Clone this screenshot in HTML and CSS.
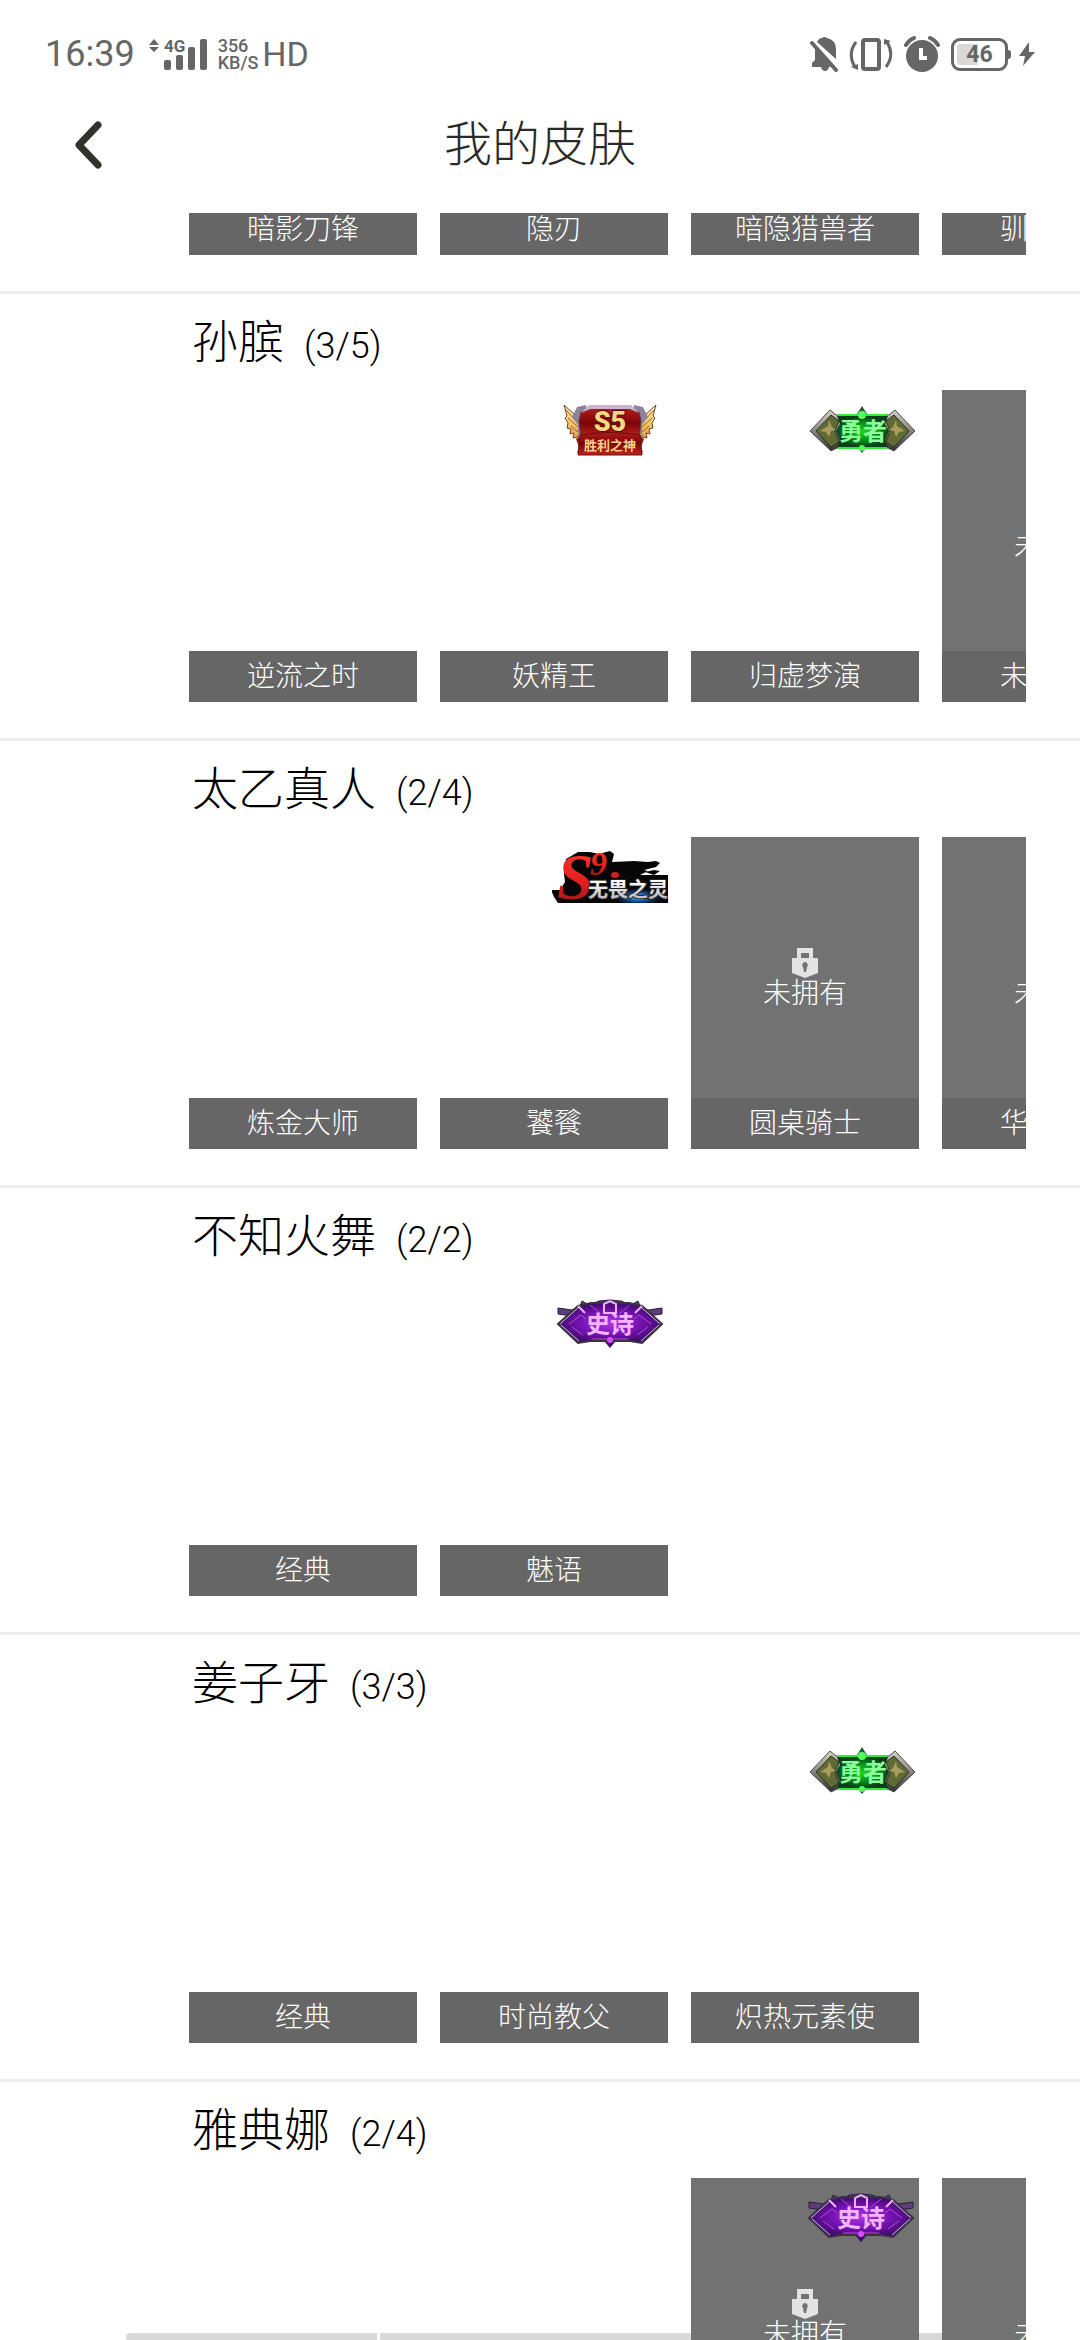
FILE: index.html
```html
<!DOCTYPE html>
<html lang="zh-CN">
<head>
  <meta charset="UTF-8" />
  <meta name="viewport" content="width=device-width, initial-scale=1.0" />
  <title>我的皮肤</title>
  <link rel="stylesheet" href="styles.css">
</head>
<body>
  <!-- shared icons and badge frames -->
  <svg class="sprite" width="0" height="0" aria-hidden="true">
    <defs>
      <linearGradient id="gold" x1="0" y1="0" x2="0" y2="1">
        <stop offset="0" stop-color="#fff3b0" />
        <stop offset="1" stop-color="#e9a23c" />
      </linearGradient>
      <linearGradient id="red" x1="0" y1="0" x2="0" y2="1">
        <stop offset="0" stop-color="#b01a1a" />
        <stop offset="0.5" stop-color="#7d0508" />
        <stop offset="1" stop-color="#c0261c" />
      </linearGradient>
      <radialGradient id="green">
        <stop offset="0" stop-color="#18d818" />
        <stop offset="0.6" stop-color="#078a1c" />
        <stop offset="1" stop-color="#0c3d1c" />
      </radialGradient>
      <radialGradient id="purple">
        <stop offset="0" stop-color="#b035e4" />
        <stop offset="0.6" stop-color="#7412b0" />
        <stop offset="1" stop-color="#420b70" />
      </radialGradient>
      <linearGradient id="steel" x1="0" y1="0" x2="0" y2="1">
        <stop offset="0" stop-color="#d6d0ca" />
        <stop offset="0.5" stop-color="#8a8680" />
        <stop offset="1" stop-color="#2d2f33" />
      </linearGradient>
      <linearGradient id="brush" x1="0" y1="0" x2="0" y2="1">
        <stop offset="0" stop-color="#ff3a2c" />
        <stop offset="0.6" stop-color="#e01f1f" />
        <stop offset="1" stop-color="#7c1016" />
      </linearGradient>
      <linearGradient id="silver" x1="0" y1="0" x2="0" y2="1">
        <stop offset="0.3" stop-color="#ffffff" />
        <stop offset="1" stop-color="#a9a3a8" />
      </linearGradient>
      <radialGradient id="blue">
        <stop offset="0" stop-color="#9fe0ff" />
        <stop offset="0.3" stop-color="#1c7fe8" />
        <stop offset="1" stop-color="#0b2a66" stop-opacity="0" />
      </radialGradient>
    </defs>

    <symbol id="lock" viewBox="0 0 26 30">
      <path fill="#e3e3e3" fill-rule="evenodd" d="M5 0h16v10h5v15l-13 5-13-5V10h5zM9 5v5h8V5zM13 14a3 3 0 0 0-2 5l1 5h2l1-5a3 3 0 0 0-2-5z" />
    </symbol>

    <symbol id="frame-s5" viewBox="0 0 116 52">
      <path fill="url(#gold)" stroke="#7a3f2a" stroke-width="1" d="M12 1l11 10 5 10-2 12-5 1 1-5-4 1 1-5-4-1 1-5-3-5 2-2zM104 1L93 11l-5 10 2 12 5 1-1-5 4 1-1-5 4-1-1-5 3-5-2-2z" />
      <path fill="none" stroke="#9d5a26" stroke-width="1" d="M14 6l11 12M16 14l10 9M19 22l7 6M102 6L91 18M100 14l-10 9M97 22l-7 6" />
      <path fill="#8b8399" d="M34 1l-9 2-5 10 6 8v14h8l2-22zM82 1l9 2 5 10-6 8v14h-8l-2-22z" />
      <path fill="url(#red)" stroke="#5d3a4a" stroke-width="1" d="M38 5h40l9 3 2 9-2 17H29l-2-17 2-9z" />
      <path fill="#cdb3cb" d="M29 9l8-8h42l8 8-9-4H38z" />
      <path fill="#8f1512" d="M24 35l5-3v15l-4 2 2-6zM92 35l-5-3v15l4 2-2-6z" />
      <path fill="url(#red)" stroke="#66100e" stroke-width="1" d="M28 31q30-5 60 0l2 20H26z" />
    </symbol>

    <symbol id="frame-s9" viewBox="0 0 116 52">
      <path fill="#060606" d="M14 8L26 1h12l9 2 11-3 4 3-2 8 22-1 14 1 8-1 4 2-4 4-12 3 4 1-8 4h28v28H38L30 52H6l-4-6-3-7h9l5-8-1-8z" />
      <path fill="#060606" d="M93 21l9-2 6 1-6 4z" />
      <ellipse cx="86" cy="46" rx="26" ry="9" fill="url(#blue)" />
      <ellipse cx="63" cy="24" rx="4" ry="3" fill="#d41f2c" />
    </symbol>

    <symbol id="frame-brave" viewBox="0 0 116 52">
      <path fill="#1c5a2c" d="M59 2l5 8H54zM59 49l5-6H54z" />
      <path fill="url(#steel)" stroke="#4b4a48" stroke-width="1" d="M7 27L27 6l6 5h53l6-5 20 21-21 20-6-3H34l-6 3z" />
      <path fill="#5f6a34" stroke="#2b3320" stroke-width="1" d="M13 27L28 11l8 6-4 10 4 11-8 5zM106 27L91 11l-8 6 4 10-4 11 8 5z" />
      <path fill="#a99c5c" d="M17 27l8-5 1-6 3 7 4 3-5 1-2 6-3-5zM102 27l-8-5-1-6-3 7-4 3 5 1 2 6 3-5z" />
      <path fill="url(#green)" d="M34 12h51l-3 8 4 7-4 9 3 7H34l3-7-4-9 4-7z" />
      <path fill="none" stroke="#2bee36" stroke-width="2" d="M35 11h49M35 44h49" />
      <circle cx="59" cy="11" r="4" fill="#55ff5c" />
      <circle cx="59" cy="44" r="3" fill="#55ff5c" />
    </symbol>

    <symbol id="frame-epic" viewBox="0 0 116 52">
      <path fill="#5b3f7c" stroke="#2a1c3c" stroke-width="1" d="M6 10l14 2 8-4 2-5 7 4 10-4 11-1 11 1 10 4 7-4 2 5 8 4 14-2v6l-14 2H20L6 16z" />
      <path fill="#3b0a63" d="M58 50l-5-6h10z" />
      <path fill="url(#purple)" stroke="#39323f" stroke-width="2" d="M6 26L26 8l13-3h38l13 3 20 18-20 19-12-2H38l-12 2z" />
      <path fill="none" stroke="#d0c2da" stroke-width="1" d="M8 26L27 9M108 26L89 9M9 27l18 16M107 27L89 43" />
      <path fill="none" stroke="#b24be0" stroke-width="1" d="M17 26l12-9 5 4M99 26l-12-9-5 4M20 29l11 8M96 29l-11 8M38 7l10 8M78 7l-10 8M40 41h36" />
      <path fill="none" stroke="#f3b0ff" stroke-width="2" d="M52 15V6l6-3 6 3v9zM26 8l7 7M90 8l-7 7" />
      <circle cx="58" cy="42" r="3" fill="#e24bff" />
    </symbol>
  </svg>

  <div class="status-bar">
    <div class="status-left">
      <span class="clock">16:39</span>
      <svg class="signal" viewBox="0 0 58 32" width="58" height="32" fill="#666">
        <path d="M0 7l5-6 5 6zM0 9l5 5 5-5z" />
        <text class="signal-type" x="15" y="14" font-size="17">4G</text>
        <rect x="15" y="22" width="7" height="10" rx="2" />
        <rect x="27" y="17" width="7" height="15" rx="2" />
        <rect x="39" y="9" width="7" height="23" rx="2" />
        <rect x="51" y="1" width="7" height="31" rx="2" />
      </svg>
      <span class="speed">356<br>KB/S</span>
      <span class="hd">HD</span>
    </div>
    <div class="status-right">
      <svg viewBox="0 0 28 36" width="28" height="36" fill="#666">
        <path d="M7 6q2-4 5-4 2-2 5 0 9 2 9 11v10z" />
        <path d="M5 12l16 19h-2q-1 4-4 4t-4-4H2v-4l3-3z" />
        <path d="M2 7l24 27" fill="none" stroke="#666" stroke-width="4" stroke-linecap="round" />
      </svg>
      <svg viewBox="0 0 44 36" width="44" height="36" fill="none" stroke="#666">
        <rect x="14" y="4" width="16" height="29" rx="2" stroke-width="4" />
        <path d="M7 6q-9 12-1 25M37 31q9-12 1-25" stroke-width="3" />
        <path d="M2 31l7-3v6zM42 5l-7-2v6z" fill="#666" stroke="none" />
      </svg>
      <svg viewBox="0 0 36 36" width="36" height="36">
        <circle cx="18" cy="20" r="16" fill="#666" />
        <path d="M2 9q3-5 8-7M34 9q-3-5-8-7" fill="none" stroke="#666" stroke-width="4" stroke-linecap="round" />
        <path d="M17 12v10h6" fill="none" stroke="#fff" stroke-width="4" />
      </svg>
      <div class="battery"><span class="battery-level">46</span></div>
      <svg viewBox="0 0 16 24" width="16" height="24" fill="#666">
        <path d="M10 0L0 14h6L4 24l12-14h-6z" />
      </svg>
    </div>
  </div>

  <header class="header">
    <button class="back" type="button" aria-label="返回">
      <svg viewBox="0 0 28 48" width="28" height="48">
        <path d="M24 4L5 24l19 20" fill="none" stroke="#35312c" stroke-width="7" stroke-linecap="round" stroke-linejoin="round" />
      </svg>
    </button>
    <h1>我的皮肤</h1>
  </header>

  <main class="list">
    <section class="hero hero-scrolled">
      <ul class="skins">
        <li class="skin"><p class="name">暗影刀锋</p></li>
        <li class="skin"><p class="name">隐刃</p></li>
        <li class="skin"><p class="name">暗隐猎兽者</p></li>
        <li class="skin"><p class="name">驯魔猎人</p></li>
      </ul>
    </section>

    <section class="hero">
      <h2>孙膑<span class="count">(3/5)</span></h2>
      <ul class="skins">
        <li class="skin"><p class="name">逆流之时</p></li>
        <li class="skin">
          <svg class="badge" viewBox="0 0 116 52">
            <use href="#frame-s5" />
            <text class="badge-latin" x="58" y="27" font-size="27" text-anchor="middle" fill="#fbd681" stroke="#5a0808">S5</text>
            <text class="badge-text" x="58" y="46" font-size="13" text-anchor="middle" fill="#ffd08a">胜利之神</text>
          </svg>
          <p class="name">妖精王</p>
        </li>
        <li class="skin">
          <svg class="badge" viewBox="0 0 116 52">
            <use href="#frame-brave" />
            <text class="badge-text" x="60" y="36" font-size="24" text-anchor="middle" fill="#8cff9a">勇者</text>
          </svg>
          <p class="name">归虚梦演</p>
        </li>
        <li class="skin locked">
          <div class="lock"><svg class="lock-icon"><use href="#lock" /></svg>未拥有</div>
          <p class="name">未来旅行</p>
        </li>
      </ul>
    </section>

    <section class="hero">
      <h2>太乙真人<span class="count">(2/4)</span></h2>
      <ul class="skins">
        <li class="skin"><p class="name">炼金大师</p></li>
        <li class="skin">
          <svg class="badge" viewBox="0 0 116 52">
            <use href="#frame-s9" />
            <text class="badge-brush" x="5" y="48" font-size="66" fill="url(#brush)">S</text>
            <text class="badge-brush" x="38" y="24" font-size="34" fill="url(#brush)">9</text>
            <text class="badge-text" x="36" y="46" font-size="20" fill="url(#silver)" stroke="#222">无畏之灵</text>
          </svg>
          <p class="name">饕餮</p>
        </li>
        <li class="skin locked">
          <div class="lock"><svg class="lock-icon"><use href="#lock" /></svg>未拥有</div>
          <p class="name">圆桌骑士</p>
        </li>
        <li class="skin locked">
          <div class="lock"><svg class="lock-icon"><use href="#lock" /></svg>未拥有</div>
          <p class="name">华丽摇滚</p>
        </li>
      </ul>
    </section>

    <section class="hero">
      <h2>不知火舞<span class="count">(2/2)</span></h2>
      <ul class="skins">
        <li class="skin"><p class="name">经典</p></li>
        <li class="skin">
          <svg class="badge" viewBox="0 0 116 52">
            <use href="#frame-epic" />
            <text class="badge-text" x="58" y="35" font-size="24" text-anchor="middle" fill="#f3b5ff">史诗</text>
          </svg>
          <p class="name">魅语</p>
        </li>
      </ul>
    </section>

    <section class="hero">
      <h2>姜子牙<span class="count">(3/3)</span></h2>
      <ul class="skins">
        <li class="skin"><p class="name">经典</p></li>
        <li class="skin"><p class="name">时尚教父</p></li>
        <li class="skin">
          <svg class="badge" viewBox="0 0 116 52">
            <use href="#frame-brave" />
            <text class="badge-text" x="60" y="36" font-size="24" text-anchor="middle" fill="#8cff9a">勇者</text>
          </svg>
          <p class="name">炽热元素使</p>
        </li>
      </ul>
    </section>

    <section class="hero">
      <h2>雅典娜<span class="count">(2/4)</span></h2>
      <ul class="skins">
        <li class="skin"></li>
        <li class="skin"></li>
        <li class="skin locked">
          <svg class="badge" viewBox="0 0 116 52">
            <use href="#frame-epic" />
            <text class="badge-text" x="58" y="35" font-size="24" text-anchor="middle" fill="#f3b5ff">史诗</text>
          </svg>
          <div class="lock"><svg class="lock-icon"><use href="#lock" /></svg>未拥有</div>
        </li>
        <li class="skin locked">
          <div class="lock"><svg class="lock-icon"><use href="#lock" /></svg>未拥有</div>
        </li>
      </ul>
    </section>
  </main>

  <div class="bottom-bar"><span></span><span></span></div>
</body>
</html>
```

FILE: styles.css
```css
* {
  box-sizing: border-box;
  margin: 0;
  padding: 0;
}

body {
  display: flex;
  flex-direction: column;
  height: 100vh;
  overflow: hidden;
  position: relative;
  background-color: #fff;
  color: #000;
  font-family: Roboto, "Noto Sans CJK SC", sans-serif;
}

svg {
  display: block;
}

.sprite {
  position: absolute;
}

/* status bar */
.status-bar {
  display: flex;
  justify-content: space-between;
  align-items: center;
  height: 80px;
  padding: 28px 45px 0 45px;
  color: #666;
}

.status-left,
.status-right {
  display: flex;
  align-items: center;
}

.status-right {
  gap: 11px;
}

.clock {
  font-size: 36px;
  line-height: 40px;
}

.signal {
  margin: 0 11px 0 14px;
}

.signal-type {
  font-weight: bold;
}

.speed {
  font-size: 18px;
  line-height: 17px;
  font-weight: 500;
}

.hd {
  margin-left: 4px;
  font-size: 34px;
  line-height: 40px;
}

.battery {
  position: relative;
  width: 57px;
  height: 33px;
  padding: 3px;
  border: 3px solid #666;
  border-radius: 9px;
}

.battery::after {
  content: "";
  position: absolute;
  top: 9px;
  right: -6px;
  width: 3px;
  height: 9px;
  border-radius: 0 3px 3px 0;
  background-color: #666;
}

.battery-level {
  display: block;
  border-radius: 3px;
  background: linear-gradient(to right, #d9d9d9 46%, transparent 46%);
  font-size: 23px;
  line-height: 21px;
  font-weight: bold;
  text-align: center;
}

/* header */
.header {
  display: grid;
  grid-template-columns: 189px 1fr 189px;
  align-items: center;
  height: 133px;
  padding-bottom: 4px;
}

.back {
  justify-self: start;
  margin-left: 48px;
  padding: 24px 26px;
  border: none;
  background: none;
  cursor: pointer;
}

h1 {
  color: #2b2926;
  font-size: 48px;
  line-height: 64px;
  font-weight: 300;
  text-align: center;
}

/* hero list */
.list {
  flex: 1;
  min-height: 0;
  overflow: hidden;
}

.hero {
  padding: 0 54px 36px 189px;
  border-bottom: 3px solid #ededed;
}

h2 {
  display: flex;
  align-items: baseline;
  height: 96px;
  padding-left: 3px;
  font-size: 46px;
  line-height: 96px;
  font-weight: 300;
}

.count {
  margin-left: 20px;
  font-size: 36px;
}

.skins {
  display: flex;
  gap: 23px;
  overflow: hidden;
  list-style: none;
}

.skin {
  display: flex;
  flex-direction: column;
  justify-content: flex-end;
  flex: none;
  position: relative;
  width: 228px;
  height: 312px;
}

.hero-scrolled .skins {
  align-items: flex-end;
  height: 42px;
}

.locked {
  background-color: #727272;
}

.name {
  background-color: #666;
  color: #fff;
  font-size: 28px;
  line-height: 51px;
  font-weight: 300;
  text-align: center;
}

.badge {
  position: absolute;
  top: 14px;
  right: 0;
  width: 116px;
  height: 52px;
}

.badge-text {
  font-family: "Noto Sans CJK SC", sans-serif;
  font-weight: bold;
  paint-order: stroke;
  stroke-width: 2px;
}

.badge-latin {
  font-family: Roboto, sans-serif;
  font-weight: 900;
  paint-order: stroke;
  stroke-width: 2px;
}

.badge-brush {
  font-family: "Liberation Serif", serif;
  font-style: italic;
  font-weight: bold;
}

.lock {
  position: absolute;
  top: 111px;
  left: 0;
  right: 0;
  color: #fff;
  font-size: 28px;
  line-height: 32px;
  font-weight: 300;
  text-align: center;
}

.lock-icon {
  width: 26px;
  height: 30px;
  margin: 0 auto;
}

/* bar at the bottom edge, behind the cards */
.bottom-bar {
  display: flex;
  gap: 3px;
  position: absolute;
  z-index: -1;
  left: 126px;
  right: 130px;
  bottom: 0;
  height: 7px;
}

.bottom-bar span {
  flex: 1;
  background-color: #d9d9d9;
}

.bottom-bar span:first-child {
  flex: 0 0 251px;
  border-top-left-radius: 4px;
}
```
